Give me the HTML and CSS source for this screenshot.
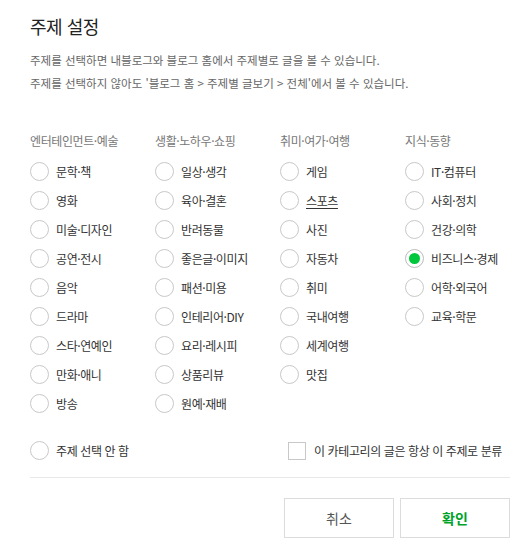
FILE: index.html
```html
<!DOCTYPE html>
<html lang="ko">
<head>
<meta charset="utf-8">
<title>주제 설정</title>
<link rel="stylesheet" href="styles.css">
</head>
<body>
<div class="dialog">
  <h1 class="title">주제 설정</h1>
  <p class="desc">주제를 선택하면 내블로그와 블로그 홈에서 주제별로 글을 볼 수 있습니다.</p>
  <p class="desc">주제를 선택하지 않아도 '블로그 홈 &gt; 주제별 글보기 &gt; 전체'에서 볼 수 있습니다.</p>

  <div class="grid">
    <div class="col">
      <div class="head">엔터테인먼트·예술</div>
      <div class="item"><span class="radio"></span>문학·책</div>
      <div class="item"><span class="radio"></span>영화</div>
      <div class="item"><span class="radio"></span>미술·디자인</div>
      <div class="item"><span class="radio"></span>공연·전시</div>
      <div class="item"><span class="radio"></span>음악</div>
      <div class="item"><span class="radio"></span>드라마</div>
      <div class="item"><span class="radio"></span>스타·연예인</div>
      <div class="item"><span class="radio"></span>만화·애니</div>
      <div class="item"><span class="radio"></span>방송</div>
    </div>
    <div class="col">
      <div class="head">생활·노하우·쇼핑</div>
      <div class="item"><span class="radio"></span>일상·생각</div>
      <div class="item"><span class="radio"></span>육아·결혼</div>
      <div class="item"><span class="radio"></span>반려동물</div>
      <div class="item"><span class="radio"></span>좋은글·이미지</div>
      <div class="item"><span class="radio"></span>패션·미용</div>
      <div class="item"><span class="radio"></span>인테리어·DIY</div>
      <div class="item"><span class="radio"></span>요리·레시피</div>
      <div class="item"><span class="radio"></span>상품리뷰</div>
      <div class="item"><span class="radio"></span>원예·재배</div>
    </div>
    <div class="col">
      <div class="head">취미·여가·여행</div>
      <div class="item"><span class="radio"></span>게임</div>
      <div class="item"><span class="radio"></span><span class="ul">스포츠</span></div>
      <div class="item"><span class="radio"></span>사진</div>
      <div class="item"><span class="radio"></span>자동차</div>
      <div class="item"><span class="radio"></span>취미</div>
      <div class="item"><span class="radio"></span>국내여행</div>
      <div class="item"><span class="radio"></span>세계여행</div>
      <div class="item"><span class="radio"></span>맛집</div>
    </div>
    <div class="col">
      <div class="head">지식·동향</div>
      <div class="item"><span class="radio"></span>IT·컴퓨터</div>
      <div class="item"><span class="radio"></span>사회·정치</div>
      <div class="item"><span class="radio"></span>건강·의학</div>
      <div class="item"><span class="radio checked"></span>비즈니스·경제</div>
      <div class="item"><span class="radio"></span>어학·외국어</div>
      <div class="item"><span class="radio"></span>교육·학문</div>
    </div>
  </div>

  <div class="extra">
    <div class="item none"><span class="radio"></span>주제 선택 안 함</div>
    <div class="check"><span class="box"></span>이 카테고리의 글은 항상 이 주제로 분류</div>
  </div>

  <div class="divider"></div>

  <div class="buttons">
    <button class="btn">취소</button>
    <button class="btn ok">확인</button>
  </div>
</div>
</body>
</html>
```

FILE: styles.css
```css
html, body {
  margin: 0;
  padding: 0;
  background: #fff;
}
body {
  font-family: "Noto Sans CJK KR", "Noto Sans", sans-serif;
  color: #333;
}
.dialog {
  width: 480px;
  padding: 13px 22px 0 30px;
}
.title {
  margin: 0;
  font-size: 18px;
  font-weight: normal;
  color: #222;
  line-height: 26px;
  letter-spacing: -0.5px;
}
.desc {
  margin: 0;
  font-size: 11.5px;
  color: #666;
  line-height: 23px;
  letter-spacing: 0;
}
.title + .desc {
  margin-top: 10px;
}
.grid {
  display: grid;
  grid-template-columns: repeat(4, 125px);
  margin-top: 36px;
}
.head {
  font-size: 12px;
  color: #777;
  line-height: 20px;
  height: 20px;
  margin-bottom: 6px;
  letter-spacing: -0.4px;
}
.item {
  display: flex;
  align-items: center;
  height: 29px;
  font-size: 12px;
  color: #333;
  letter-spacing: -0.4px;
}
.radio {
  box-sizing: border-box;
  width: 19px;
  height: 19px;
  border: 1px solid #c8c8c8;
  border-radius: 50%;
  margin-right: 7px;
  display: flex;
  align-items: center;
  justify-content: center;
  flex-shrink: 0;
}
.radio.checked {
  border-color: #bbb;
}
.radio.checked::after {
  content: "";
  width: 11px;
  height: 11px;
  border-radius: 50%;
  background: #00c73c;
}
.ul {
  text-decoration: underline;
  text-underline-offset: 2px;
}
.extra {
  display: flex;
  align-items: center;
  margin-top: 18px;
}
.none {
  width: 258px;
}
.check {
  display: flex;
  align-items: center;
  font-size: 12px;
  color: #333;
  letter-spacing: -0.4px;
}
.box {
  box-sizing: border-box;
  width: 18px;
  height: 18px;
  border: 1px solid #c8c8c8;
  margin-right: 8px;
}
.divider {
  height: 1px;
  background: #e8e8e8;
  margin-top: 12px;
}
.buttons {
  display: flex;
  justify-content: flex-end;
  gap: 6px;
  margin-top: 20px;
}
.btn {
  box-sizing: border-box;
  width: 110px;
  height: 40px;
  background: #fff;
  border: 1px solid #dcdcdc;
  font-family: inherit;
  font-size: 14px;
  color: #555;
  padding: 0;
}
.btn.ok {
  color: #00a32a;
  font-weight: bold;
}
```
